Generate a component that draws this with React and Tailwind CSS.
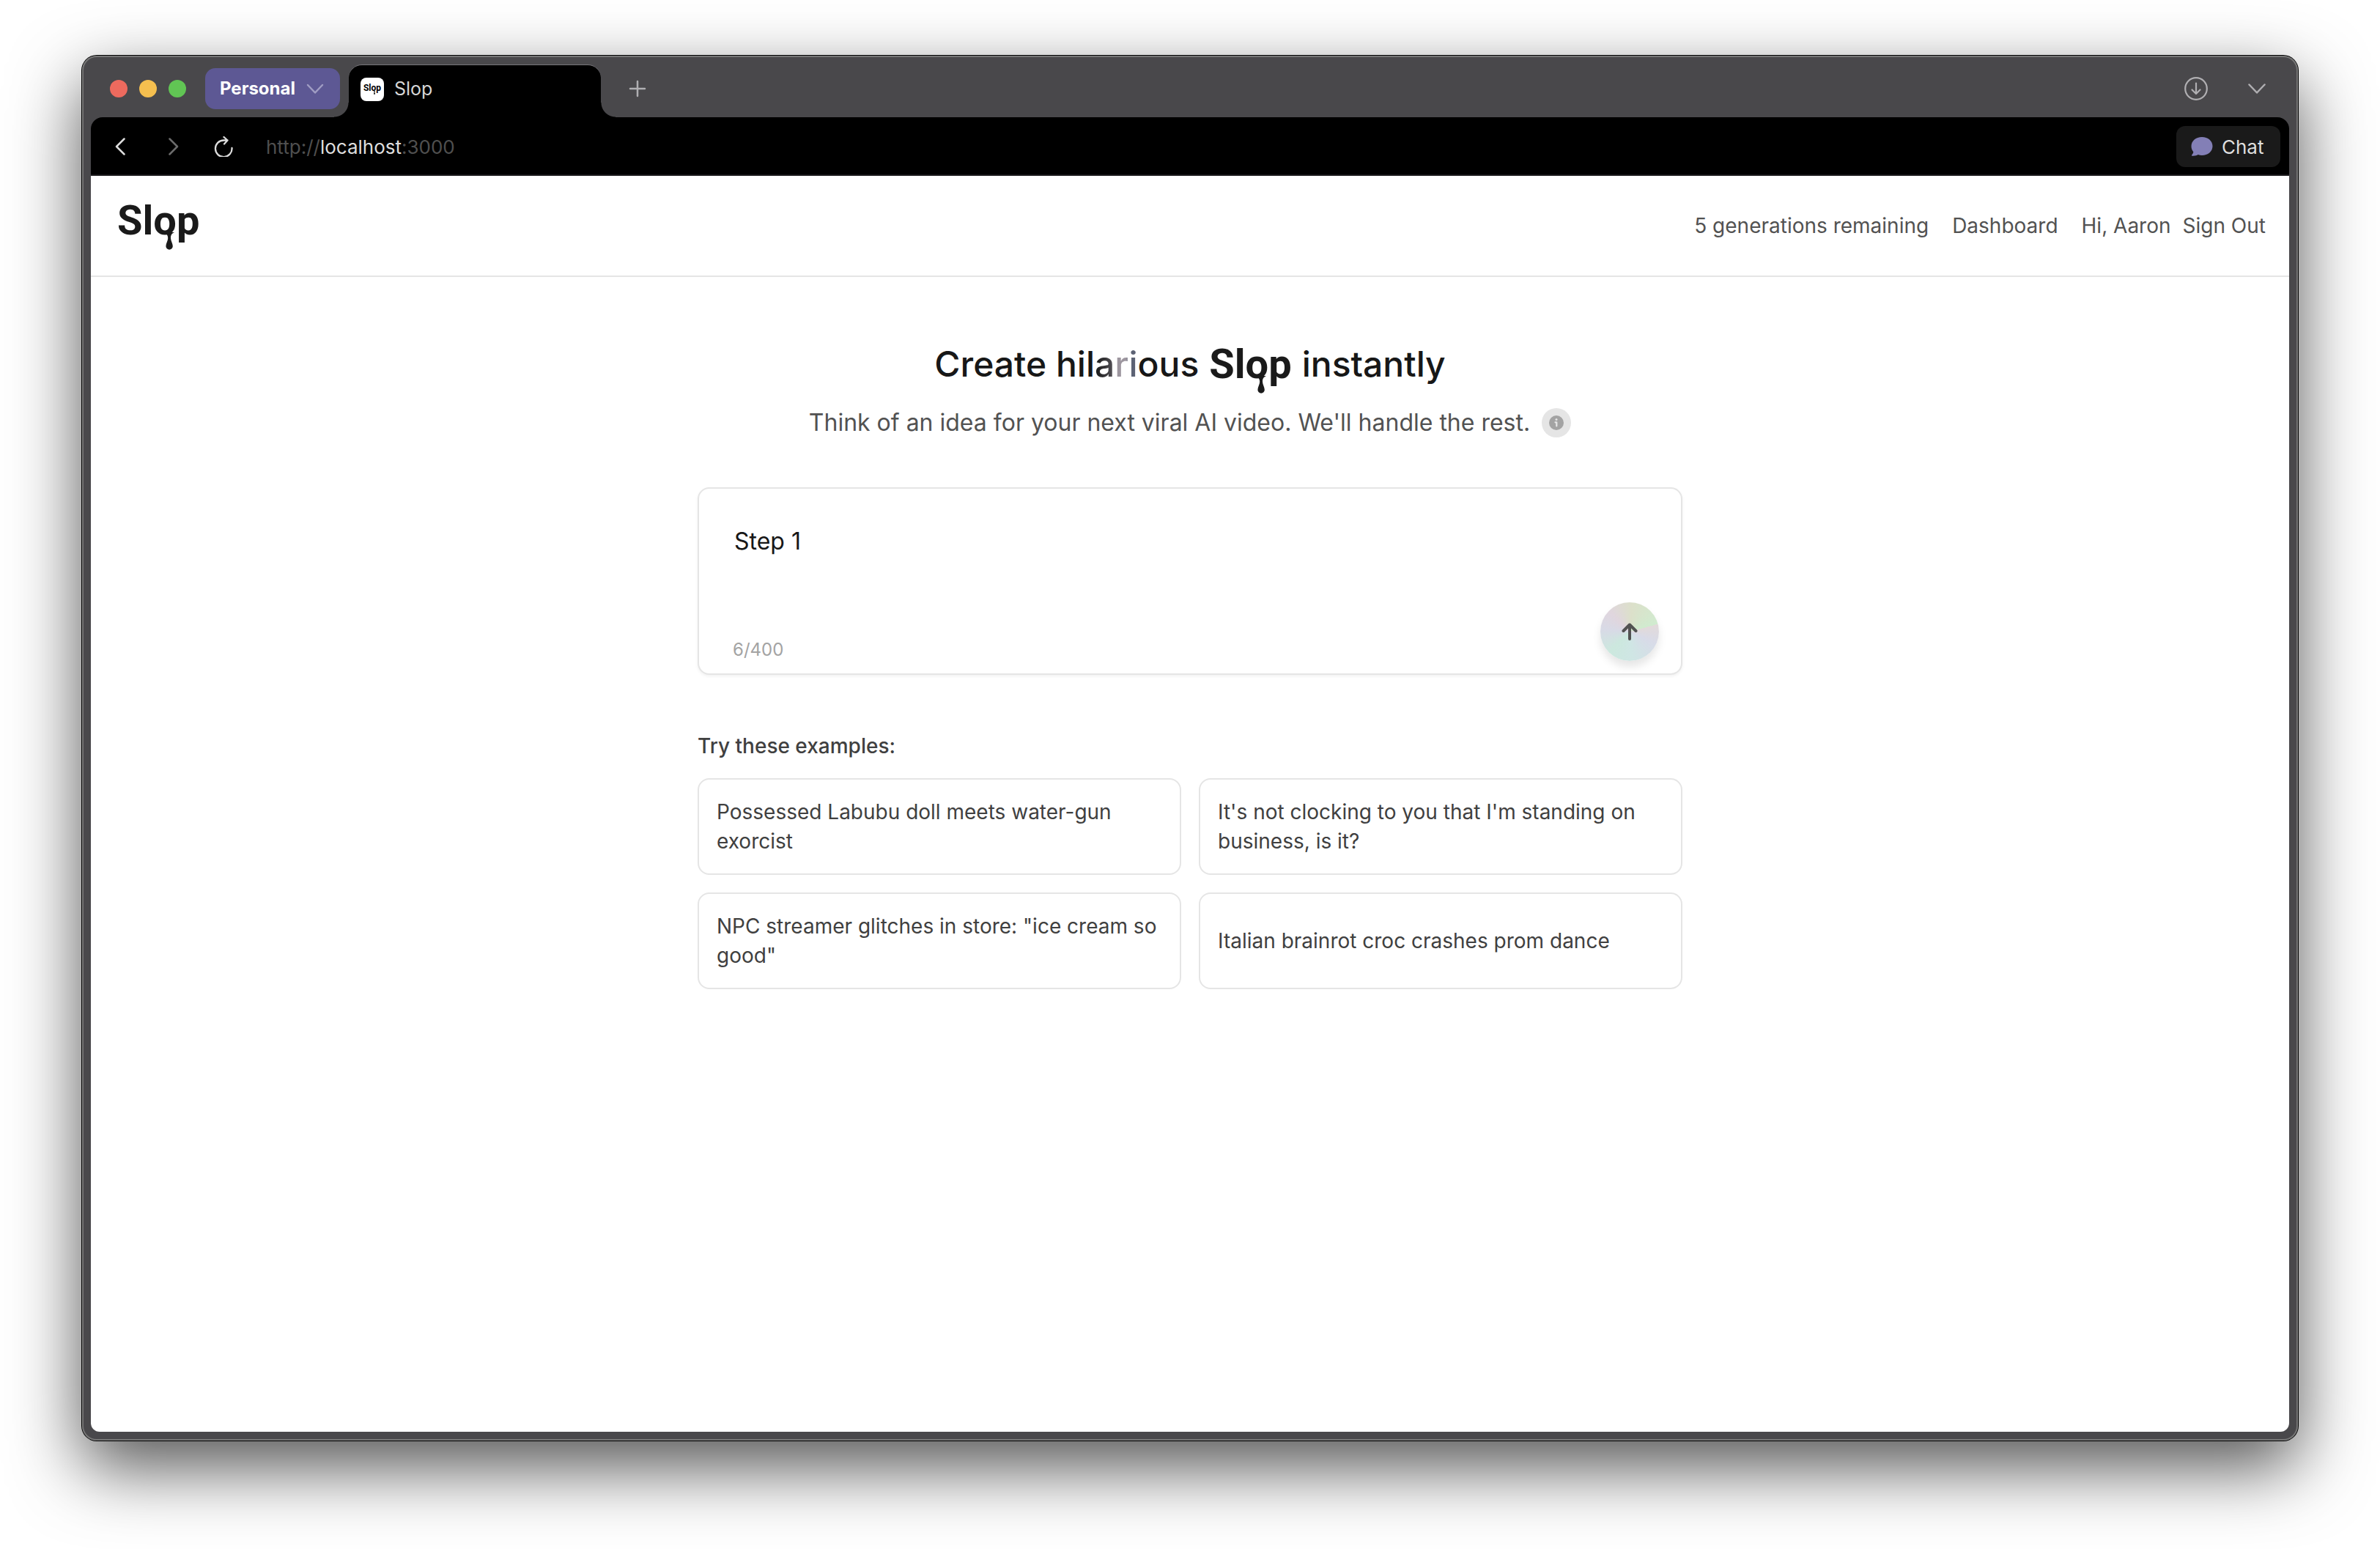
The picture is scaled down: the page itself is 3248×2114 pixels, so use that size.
import React, { useState } from "react";

function Drip({ className }) {
  return (
    <svg viewBox="0 0 20 24" className={className} fill="currentColor" aria-hidden="true">
      <path d="M3 0h14c-4 2-5 4-5 8 0 4 2.800 7 2.800 11a4.700 4.700 0 0 1-9.400 0c0-4 2.800-7 2.800-11 0-3-1.200-6-5.200-8Z" />
    </svg>
  );
}

function SlopLogo() {
  return (
    <span className="relative inline-block font-[Roboto,sans-serif] text-[56px] leading-[60px] font-bold text-[#1a1a1a]">
      Slop
      <Drip className="absolute top-[46px] left-[61px] h-6 w-5" />
    </span>
  );
}

function Stroke({ d, className, width = 2 }) {
  return (
    <svg viewBox="0 0 24 24" className={className} fill="none" stroke="currentColor" strokeWidth={width} strokeLinecap="round" strokeLinejoin="round" aria-hidden="true">
      <path d={d} />
    </svg>
  );
}

function TabBar() {
  return (
    <div className="flex h-[84px] items-center pt-1.5 pr-11 pl-[38px] text-[#b0afb2]">
      <div className="flex gap-4">
        <button aria-label="Close" className="size-6 rounded-full bg-[#ed6a5e]" />
        <button aria-label="Minimize" className="size-6 rounded-full bg-[#f5bf4f]" />
        <button aria-label="Zoom" className="size-6 rounded-full bg-[#61c554]" />
      </div>
      <button className="ml-[26px] flex h-14 w-[184px] items-center justify-between rounded-[14px] bg-[#5d5894] pr-[22px] pl-5 text-[24px] font-bold text-white">
        Personal
        <Stroke d="M2 7 12 17.500 22 7" className="size-6 text-[#a09dc3]" width={2.5} />
      </button>
      <div className="relative ml-3 flex h-[72px] w-[344px] items-center gap-[14px] self-end rounded-t-[18px] border-t border-[#77767a] bg-black px-4 pb-1.5 text-[#d6d6d6]">
        <span className="absolute bottom-0 -left-5 size-5 bg-[radial-gradient(circle_at_0_0,transparent_19px,black_20px)]" />
        <span className="absolute -right-5 bottom-0 size-5 bg-[radial-gradient(circle_at_100%_0,transparent_19px,black_20px)]" />
        <span className="relative flex size-8 items-center justify-center rounded-lg bg-white pb-1 font-[Roboto,sans-serif] text-[12px] font-bold text-black">
          Slop
          <Drip className="absolute top-[18px] left-[17px] h-[5px] w-1" />
        </span>
        <span className="text-[25px]">Slop</span>
      </div>
      <button aria-label="New tab" className="ml-[38px]">
        <Stroke d="M12 2v20M2 12h20" className="size-6" width={2.5} />
      </button>
      <div className="ml-auto flex items-center gap-[55px]">
        <button aria-label="Downloads">
          <svg viewBox="0 0 32 32" className="size-8" fill="none" stroke="currentColor" strokeWidth="2.200" strokeLinecap="round" strokeLinejoin="round" aria-hidden="true">
            <circle cx="16" cy="16" r="14.800" />
            <path d="M16 8.500v14M10.500 17.500l5.500 5.500 5.500-5.500" />
          </svg>
        </button>
        <button aria-label="Tab list">
          <Stroke d="M1.500 6.500 12 17.500 22.500 6.500" className="size-6" width={2.5} />
        </button>
      </div>
    </div>
  );
}

function AddressBar() {
  return (
    <div className="flex h-20 items-center rounded-t-2xl border-b-2 border-[#1b1a1c] bg-black pt-0.5 pr-3 pl-[28px]">
      <button aria-label="Back" className="text-[#dcdcdc]">
        <Stroke d="M17.500 1.500 7 12 17.500 22.500" className="size-6" width={2.5} />
      </button>
      <button aria-label="Forward" className="ml-12 text-[#6b6b6b]">
        <Stroke d="M7.500 1.500 18 12 7.500 22.500" className="size-6" width={2.5} />
      </button>
      <button aria-label="Reload" className="ml-[43px] text-[#dcdcdc]">
        <svg viewBox="0 0 28 28" className="size-7" fill="none" stroke="currentColor" strokeWidth="2.300" strokeLinecap="round" strokeLinejoin="round" aria-hidden="true">
          <path d="M25.500 16A11.300 11.300 0 1 1 14.200 5.500H19.500M14.500 1 19.500 5.500l-4.500 5" />
        </svg>
      </button>
      <div className="ml-11 text-[26px] text-[#4f4f4f]">
        http://<span className="text-[#dedede]">localhost</span>:3000
      </div>
      <button className="ml-auto flex h-14 w-[142px] items-center gap-3 rounded-xl bg-[#1a1a1a] pl-5 text-[26px] text-[#dedede]">
        <svg viewBox="0 0 30 26" className="h-[26px] w-[30px] text-[#837fb6]" fill="currentColor" aria-hidden="true">
          <path d="M15 0c8.300 0 14.500 5.400 14.500 12.500S23.300 25 15 25c-1.900 0-3.700-.3-5.300-.9C8 25.300 4.800 26 1.800 25.700c-.9-.1-1.100-.9-.5-1.500 1.200-1.200 1.900-2.600 2-4C1.500 18.100.5 15.400.5 12.500.500 5.400 6.700 0 15 0Z" />
        </svg>
        Chat
      </button>
    </div>
  );
}

function SiteHeader() {
  return (
    <header className="flex h-[138px] items-center justify-between border-b-2 border-[#e5e5e5] pr-8 pl-9">
      <a href="#home" aria-label="Slop home" className="mb-3.5 flex">
        <SlopLogo />
      </a>
      <nav className="flex items-center gap-8 text-[28px] leading-10 text-[#525252]">
        <span>5 generations remaining</span>
        <a href="#dashboard">Dashboard</a>
        <div className="flex gap-4">
          <span>Hi, Aaron</span>
          <button>Sign Out</button>
        </div>
      </nav>
    </header>
  );
}

function PromptBox() {
  const [value, setValue] = useState("Step 1");
  return (
    <form className="relative mt-16 h-64 rounded-2xl border-2 border-[#e5e5e5] bg-white shadow-[0_2px_4px_rgba(0,0,0,0.06)]" onSubmit={(e) => e.preventDefault()}>
      <textarea
        aria-label="Video idea"
        value={value}
        maxLength={400}
        onChange={(e) => setValue(e.target.value)}
        className="block h-[150px] w-full resize-none bg-transparent px-12 pt-12 text-[32px] leading-[48px] text-[#171717] outline-none"
      />
      <span className="absolute bottom-4 left-[46px] text-[24px] leading-8 text-[#a3a3a3]">6/400</span>
      <button
        aria-label="Generate"
        className="absolute right-[30px] bottom-[17px] flex size-20 items-center justify-center rounded-full bg-[conic-gradient(from_75deg,#e2dada,#d8dbe8_40deg,#cfe6e4_100deg,#cce8de_150deg,#d8dae6_200deg,#e0d6de_240deg,#dce0ca_290deg,#d0ebcf_360deg)] text-[#525252] shadow-[0_8px_12px_rgba(0,0,0,0.1)]"
      >
        <Stroke d="M12 22V2.500M3.500 11l8.500-8.500 8.500 8.500" className="size-6" width={4} />
      </button>
    </form>
  );
}

const examples = [
  "Possessed Labubu doll meets water-gun exorcist",
  "It's not clocking to you that I'm standing on business, is it?",
  'NPC streamer glitches in store: "ice cream so good"',
  "Italian brainrot croc crashes prom dance",
];

function Examples() {
  return (
    <section className="mt-[77px]">
      <h2 className="text-[28px] leading-10 font-medium text-[#404040]">Try these examples:</h2>
      <div className="mt-6 grid grid-cols-2 gap-6">
        {examples.map((text) => (
          <button key={text} className="min-h-[132px] rounded-2xl border-2 border-[#e5e5e5] bg-white p-6 text-left text-[28px] leading-10 text-[#404040]">
            {text}
          </button>
        ))}
      </div>
    </section>
  );
}

export default function App() {
  return (
    <div className="flex min-h-screen flex-col bg-white px-[112px] pt-[76px] pb-[148px] font-[Inter,sans-serif]">
      <div className="flex flex-1 flex-col rounded-[20px] bg-[#49484b] shadow-[inset_0_0_0_2px_#767676,0_0_0_1px_#000,0_36px_96px_rgba(0,0,0,0.68)]">
        <TabBar />
        <div className="mx-3 mb-3 flex flex-1 flex-col">
          <AddressBar />
          <div className="flex flex-1 flex-col rounded-b-xl bg-white">
            <SiteHeader />
            <main className="mx-auto w-full max-w-[1344px] pt-[83px]">
              <h1 className="flex items-center justify-center gap-[14px] text-[48px] leading-[72px] font-medium text-[#171717]">
                <span>
                  Create hil
                  <span className="bg-gradient-to-r from-[#171717] to-[#58555b] bg-clip-text text-transparent">a</span>
                  <span className="bg-gradient-to-r from-[#9d969f] from-50% to-[#5c6274] to-60% bg-clip-text text-transparent">ri</span>
                  ous
                </span>
                <SlopLogo />
                <span>instantly</span>
              </h1>
              <div className="mt-5 flex items-center justify-center gap-4 text-[32px] leading-[48px] text-[#525252]">
                <p>Think of an idea for your next viral AI video. We'll handle the rest.</p>
                <button aria-label="More information" className="flex size-10 items-center justify-center rounded-full bg-[#e5e5e5]">
                  <svg viewBox="0 0 20 20" className="size-5" aria-hidden="true">
                    <circle cx="10" cy="10" r="10" fill="#a3a3a3" />
                    <circle cx="10" cy="5.500" r="1.500" fill="#e5e5e5" />
                    <path d="M8.500 9.300H10.300V14.500" stroke="#e5e5e5" strokeWidth="2.200" fill="none" strokeLinecap="round" strokeLinejoin="round" />
                  </svg>
                </button>
              </div>
              <PromptBox />
              <Examples />
            </main>
          </div>
        </div>
      </div>
    </div>
  );
}
